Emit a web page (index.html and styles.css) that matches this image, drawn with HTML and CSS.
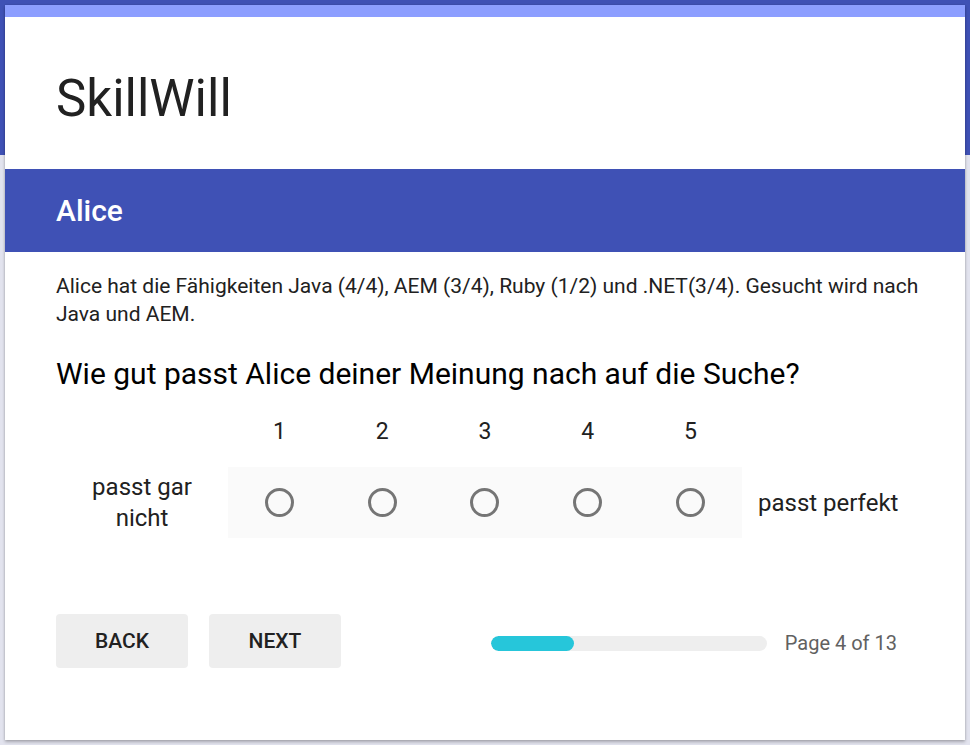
FILE: index.html
```html
<!DOCTYPE html>
<html lang="de">
<head>
<meta charset="utf-8">
<title>SkillWill</title>
<link rel="stylesheet" href="styles.css">
</head>
<body>
<div class="page">
  <div class="card">
    <header class="title-area">
      <h1 class="title">SkillWill</h1>
    </header>
    <div class="section-band">
      <h2 class="section-title">Alice</h2>
    </div>
    <div class="content">
      <p class="desc">Alice hat die Fähigkeiten Java (4/4), AEM (3/4), Ruby (1/2) und .NET(3/4). Gesucht wird nach Java und AEM.</p>
      <h3 class="question">Wie gut passt Alice deiner Meinung nach auf die Suche?</h3>
      <div class="scale">
        <div class="scale-nums">
          <span class="spacer"></span>
          <div class="nums">
            <span>1</span><span>2</span><span>3</span><span>4</span><span>5</span>
          </div>
        </div>
        <div class="scale-row">
          <div class="label-left">passt gar<br>nicht</div>
          <div class="radios">
            <span class="cell"><span class="radio"></span></span>
            <span class="cell"><span class="radio"></span></span>
            <span class="cell"><span class="radio"></span></span>
            <span class="cell"><span class="radio"></span></span>
            <span class="cell"><span class="radio"></span></span>
          </div>
          <div class="label-right">passt perfekt</div>
        </div>
      </div>
      <div class="footer">
        <div class="buttons">
          <button class="btn">BACK</button>
          <button class="btn">NEXT</button>
        </div>
        <div class="progress">
          <div class="bar"><div class="fill" style="width:30%"></div></div>
          <span class="page-label">Page 4 of 13</span>
        </div>
      </div>
    </div>
  </div>
</div>
</body>
</html>
```
FILE: styles.css
```css
* { box-sizing: border-box; }
html, body { margin: 0; padding: 0; }
body {
  width: 970px;
  height: 745px;
  overflow: hidden;
  background: linear-gradient(to bottom, #3f51b5 0, #3f51b5 155px, #e2e3ee 155px, #e2e3ee 100%);
  font-family: Roboto, "Liberation Sans", sans-serif;
  color: #212121;
}
.page {
  padding: 5px 5px 0 5px;
}
.card {
  width: 960px;
  height: 735px;
  background: #fff;
  border-top: 12px solid #8c9eff;
  box-shadow: 0 2px 3px rgba(0, 0, 0, 0.25), 0 0 2px rgba(0, 0, 0, 0.12);
}
.title-area {
  height: 152px;
  padding: 0 51px;
  display: flex;
  align-items: center;
}
.title {
  margin: 0;
  font-size: 51px;
  font-weight: 400;
  color: #212121;
  position: relative;
  top: 5px;
}
.section-band {
  height: 83px;
  background: #3f51b5;
  padding: 0 51px;
  display: flex;
  align-items: center;
}
.section-title {
  margin: 0;
  color: #fff;
  font-size: 30px;
  font-weight: 500;
}
.content {
  padding: 20px 38px 0 51px;
}
.desc {
  margin: 0;
  font-size: 21px;
  line-height: 28px;
  color: #212121;
}
.question {
  margin: 29px 0 0 0;
  font-size: 30px;
  font-weight: 400;
  line-height: 34px;
  color: #000;
}
.scale {
  margin-top: 24px;
}
.scale-nums {
  display: flex;
  height: 32px;
  align-items: center;
}
.spacer { width: 172px; }
.nums {
  display: flex;
  width: 514px;
}
.nums span {
  flex: 1;
  text-align: center;
  font-size: 23px;
}
.scale-row {
  margin-top: 20px;
  display: flex;
  align-items: center;
}
.label-left {
  width: 172px;
  text-align: center;
  font-size: 24px;
  line-height: 31px;
  color: #212121;
}
.radios {
  width: 514px;
  height: 71px;
  background: #fafafa;
  display: flex;
  align-items: center;
}
.cell {
  flex: 1;
  display: flex;
  justify-content: center;
}
.radio {
  width: 29px;
  height: 29px;
  border: 3px solid #757575;
  border-radius: 50%;
  display: block;
}
.label-right {
  margin-left: 16px;
  font-size: 24px;
  color: #212121;
}
.footer {
  margin-top: 76px;
  display: flex;
  align-items: center;
  justify-content: space-between;
}
.buttons {
  display: flex;
  gap: 21px;
}
.btn {
  width: 132px;
  height: 54px;
  border: none;
  border-radius: 4px;
  background: #eeeeee;
  font-family: Roboto, "Liberation Sans", sans-serif;
  font-size: 21px;
  font-weight: 500;
  color: #212121;
  padding: 0;
}
.progress {
  display: flex;
  align-items: center;
  margin-right: 30px;
  padding-top: 4px;
}
.bar {
  width: 276px;
  height: 15px;
  border-radius: 8px;
  background: #eeeeee;
  overflow: hidden;
}
.fill {
  height: 100%;
  background: #26c6da;
  border-radius: 8px;
}
.page-label {
  margin-left: 18px;
  font-size: 20px;
  color: #616161;
}
```
